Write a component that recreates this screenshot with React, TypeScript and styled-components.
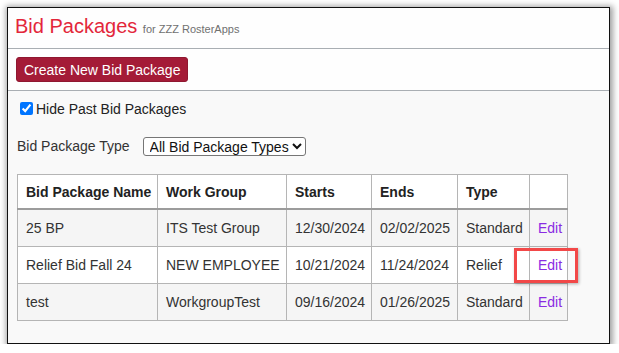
import React from "react";
import styled, { createGlobalStyle } from "styled-components";

const Global = createGlobalStyle`
  html, body { margin: 0; padding: 0; background: #ffffff; }
  body { font-family: "Liberation Sans", Arial, sans-serif; font-size: 14px; color: #333; }
`;

const Frame = styled.div`
  box-sizing: border-box;
  margin: 7px 0 0 7px;
  width: 603px;
  height: 337px;
  border: 1px solid #111;
  box-shadow: 1px 1px 6px 2px rgba(0, 0, 0, 0.38);
  background: #fefefe;
  display: flex;
  flex-direction: column;
  overflow: hidden;
`;

const Header = styled.div`
  box-sizing: border-box;
  flex-shrink: 0;
  height: 41px;
  padding: 7px 7px 0;
  border-bottom: 1px solid #a9aeb3;
`;

const Title = styled.h1`
  margin: 0;
  font-size: 20px;
  line-height: 23px;
  font-weight: normal;
  color: #e3263a;
  white-space: nowrap;
`;

const Sub = styled.small`
  font-size: 11px;
  color: #707070;
`;

const ActionBar = styled.div`
  flex-shrink: 0;
  padding: 8px 8px;
  border-bottom: 1px solid #a9aeb3;
  display: flex;
`;

const PrimaryButton = styled.button`
  box-sizing: border-box;
  height: 25px;
  padding: 0 7px;
  display: inline-flex;
  align-items: center;
  background: #a41b37;
  color: #fff;
  border: 1px solid #8f1730;
  border-radius: 3px;
  font-family: "Liberation Sans", Arial, sans-serif;
  font-size: 14px;
`;

const Content = styled.div`
  flex: 1;
  min-height: 0;
  background: #f9f9f9;
  padding: 8px 8px;
  display: flex;
  flex-direction: column;
  align-items: flex-start;
`;

const CheckRow = styled.label`
  display: flex;
  align-items: flex-start;
  height: 20px;
  line-height: 20px;
  color: #222;
`;

const Check = styled.input`
  width: 13px;
  height: 13px;
  margin: 3px 3px 0 4px;
`;

const FilterRow = styled.div`
  margin-top: 17px;
  display: flex;
  align-items: center;
  height: 20px;
`;

const FilterLabel = styled.span`
  margin-left: 1px;
  margin-right: 13px;
  color: #333;
`;

const Select = styled.select`
  box-sizing: border-box;
  width: 163px;
  height: 19px;
  padding: 0 0 0 2px;
  border: 1px solid #767676;
  border-radius: 3px;
  background: #fff;
  color: #111;
  font-family: "Liberation Sans", Arial, sans-serif;
  font-size: 14px;
`;

const TableWrap = styled.div`
  position: relative;
  flex-shrink: 0;
  margin: 18px 0 0 1px;
`;

const Table = styled.table`
  border-collapse: collapse;
  table-layout: fixed;
  width: 550px;
  background: #fff;
`;

const Th = styled.th`
  text-align: left;
  font-weight: bold;
  color: #222;
  padding: 7px 6px 6px 8px;
  line-height: 20px;
  white-space: nowrap;
  overflow: visible;
  border: 1px solid #b5b5b5;
  border-bottom: 2px solid #9c9c9c;
`;

const Row = styled.tr<{ $striped?: boolean }>`
  background: ${(p) => (p.$striped ? "#f5f5f5" : "#ffffff")};
`;

const Td = styled.td`
  padding: 8px 6px 8px 8px;
  line-height: 20px;
  border: 1px solid #b5b5b5;
  color: #333;
  white-space: nowrap;
  overflow: visible;
`;

const EditLink = styled.a`
  color: #8a2be2;
  text-decoration: none;
`;

const Highlight = styled.div`
  position: absolute;
  box-sizing: border-box;
  left: 497px;
  top: 74px;
  width: 64px;
  height: 35px;
  border: 3px solid #f24848;
  box-shadow: 1px 1px 3px rgba(0, 0, 0, 0.3);
  pointer-events: none;
`;

const rows = [
  ["25 BP", "ITS Test Group", "12/30/2024", "02/02/2025", "Standard"],
  ["Relief Bid Fall 24", "NEW EMPLOYEE", "10/21/2024", "11/24/2024", "Relief"],
  ["test", "WorkgroupTest", "09/16/2024", "01/26/2025", "Standard"],
];

const widths = [140, 129, 85, 86, 72, 38];

export default function App() {
  return (
    <>
      <Global />
      <Frame>
        <Header>
          <Title>
            Bid Packages <Sub>for ZZZ RosterApps</Sub>
          </Title>
        </Header>
        <ActionBar>
          <PrimaryButton>Create New Bid Package</PrimaryButton>
        </ActionBar>
        <Content>
          <CheckRow>
            <Check type="checkbox" defaultChecked />
            Hide Past Bid Packages
          </CheckRow>
          <FilterRow>
            <FilterLabel>Bid Package Type</FilterLabel>
            <Select defaultValue="all">
              <option value="all">All Bid Package Types</option>
            </Select>
          </FilterRow>
          <TableWrap>
            <Table>
              <colgroup>
                {widths.map((w, i) => (
                  <col key={i} style={{ width: w }} />
                ))}
              </colgroup>
              <thead>
                <tr>
                  <Th>Bid Package Name</Th>
                  <Th>Work Group</Th>
                  <Th>Starts</Th>
                  <Th>Ends</Th>
                  <Th>Type</Th>
                  <Th></Th>
                </tr>
              </thead>
              <tbody>
                {rows.map((r, i) => (
                  <Row key={i} $striped={i % 2 === 0}>
                    {r.map((c, j) => (
                      <Td key={j}>{c}</Td>
                    ))}
                    <Td>
                      <EditLink href="#">Edit</EditLink>
                    </Td>
                  </Row>
                ))}
              </tbody>
            </Table>
            <Highlight />
          </TableWrap>
        </Content>
      </Frame>
    </>
  );
}
